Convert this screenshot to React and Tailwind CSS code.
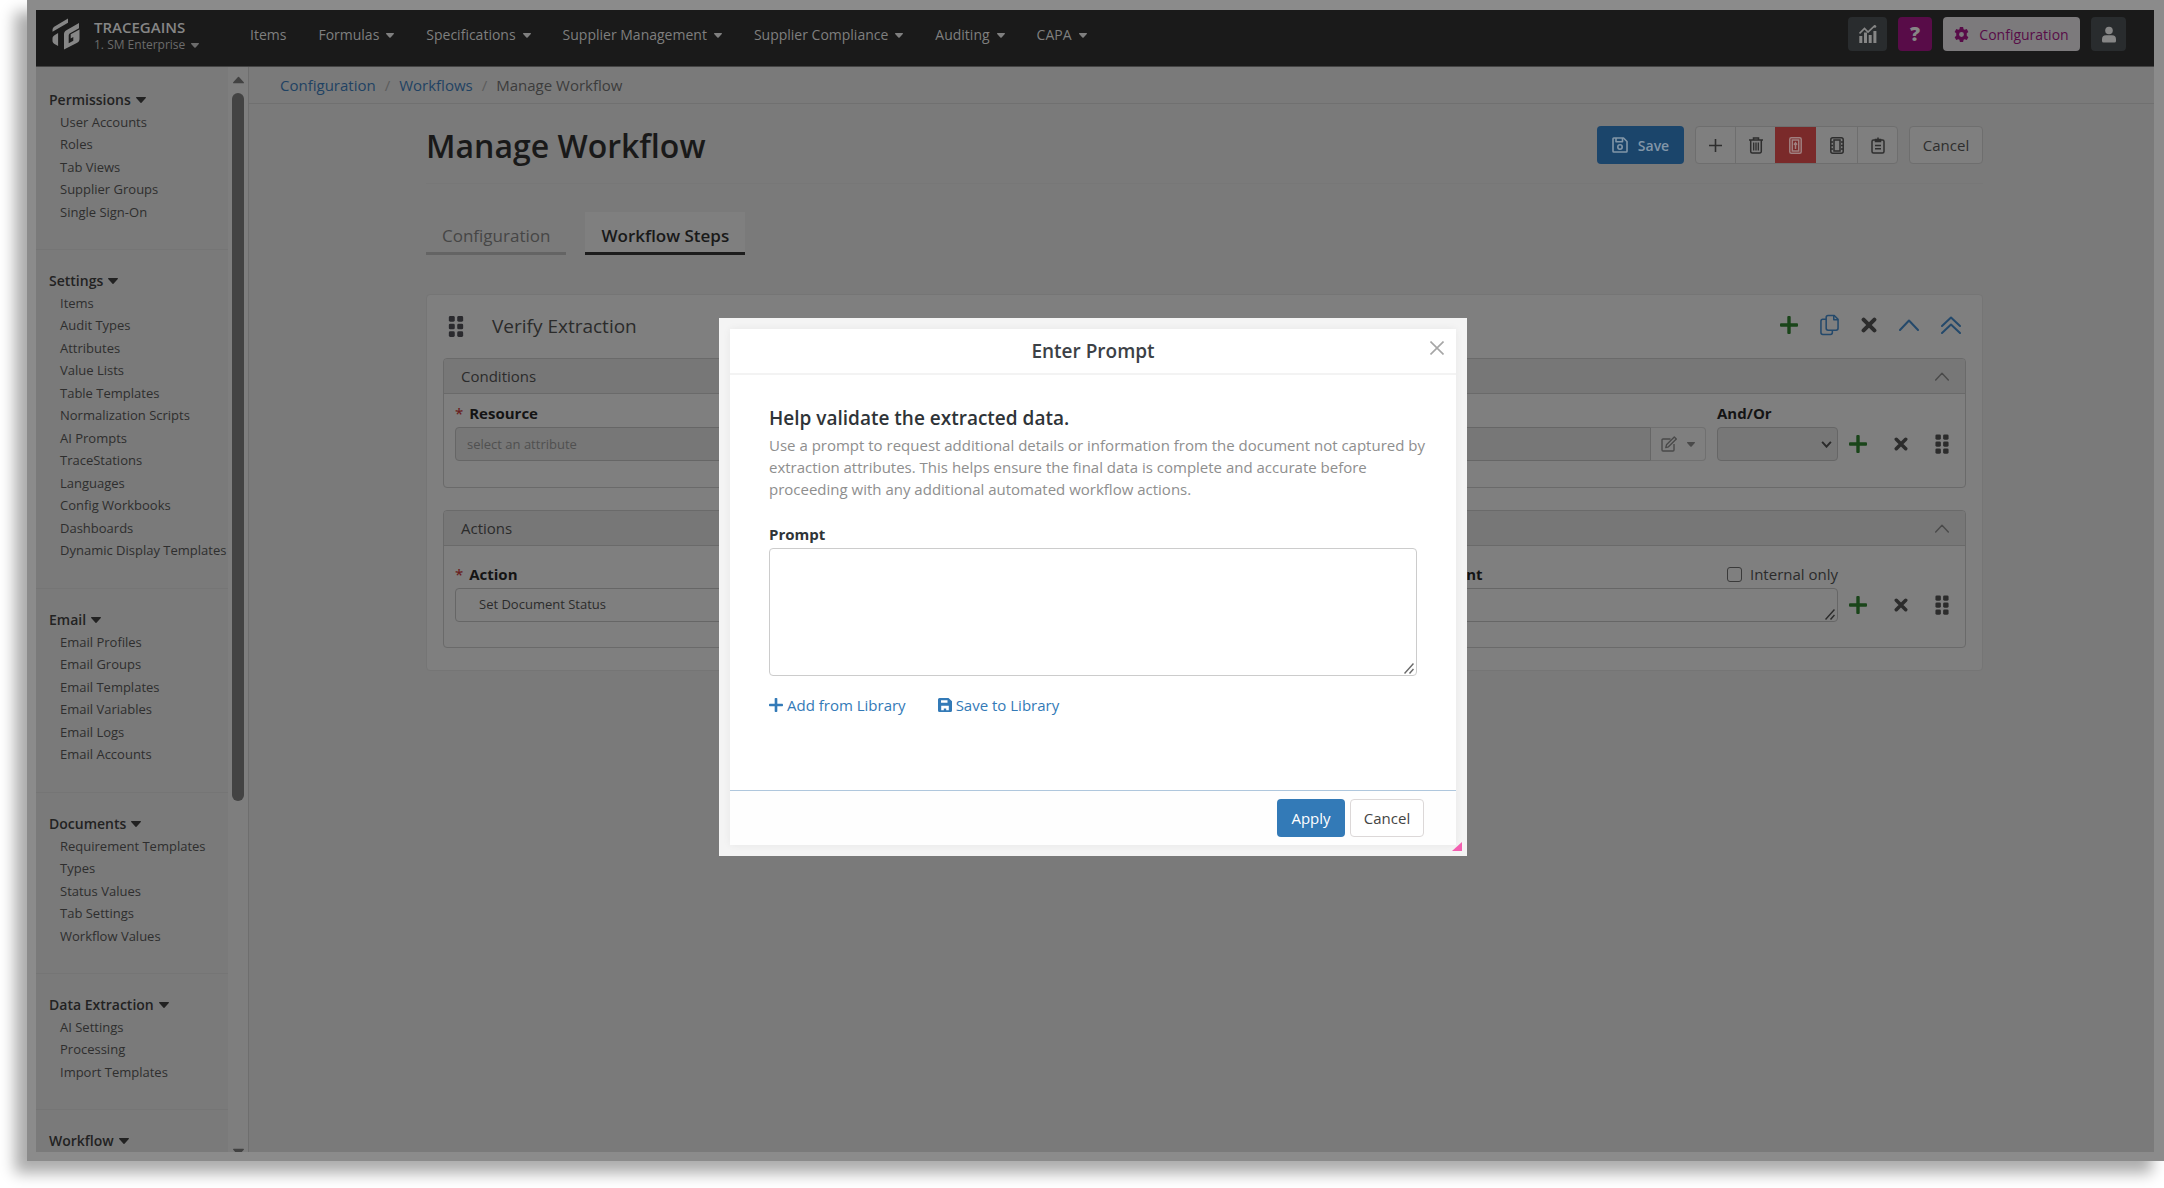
import React from "react";

const NAV = [
  { label: "Items", menu: false },
  { label: "Formulas", menu: true },
  { label: "Specifications", menu: true },
  { label: "Supplier Management", menu: true },
  { label: "Supplier Compliance", menu: true },
  { label: "Auditing", menu: true },
  { label: "CAPA", menu: true },
];

const GROUPS = [
  { title: "Permissions", items: ["User Accounts", "Roles", "Tab Views", "Supplier Groups", "Single Sign-On"] },
  {
    title: "Settings",
    items: [
      "Items", "Audit Types", "Attributes", "Value Lists", "Table Templates", "Normalization Scripts",
      "AI Prompts", "TraceStations", "Languages", "Config Workbooks", "Dashboards", "Dynamic Display Templates",
    ],
  },
  { title: "Email", items: ["Email Profiles", "Email Groups", "Email Templates", "Email Variables", "Email Logs", "Email Accounts"] },
  { title: "Documents", items: ["Requirement Templates", "Types", "Status Values", "Tab Settings", "Workflow Values"] },
  { title: "Data Extraction", items: ["AI Settings", "Processing", "Import Templates"] },
  { title: "Workflow", items: [] },
];

function Caret({ className = "w-2 h-[5px]" }) {
  return (
    <svg viewBox="0 0 10 6" className={className} fill="currentColor" aria-hidden="true">
      <path d="M0.6 0h8.800c.5 0 .8.6.4 1L5.500 5.700a.7.7 0 0 1-1 0L.2 1C-.2.6.1 0 .6 0z" />
    </svg>
  );
}

function Plus({ className }) {
  return (
    <svg viewBox="0 0 18 18" className={className} fill="currentColor" aria-hidden="true">
      <rect x="7.300" y="0" width="3.400" height="18" rx="1" />
      <rect x="0" y="7.300" width="18" height="3.400" rx="1" />
    </svg>
  );
}

function Cross({ className }) {
  return (
    <svg viewBox="0 0 16 16" className={className} fill="none" stroke="currentColor" strokeWidth="4" strokeLinecap="round" aria-hidden="true">
      <path d="M2.600 2.600l10.800 10.800M13.400 2.600L2.600 13.400" />
    </svg>
  );
}

function Grip({ className }) {
  return (
    <svg viewBox="0 0 16 22" className={className} fill="currentColor" aria-hidden="true">
      {[0, 8, 16].map((y) => (
        <React.Fragment key={y}>
          <rect x="0.500" y={y} width="6.200" height="6" rx="1.500" />
          <rect x="9.300" y={y} width="6.200" height="6" rx="1.500" />
        </React.Fragment>
      ))}
    </svg>
  );
}

function ChevronUp({ className }) {
  return (
    <svg viewBox="0 0 20 12" className={className} fill="none" stroke="currentColor" strokeWidth="2" strokeLinecap="round" strokeLinejoin="round" aria-hidden="true">
      <path d="M1 11L10 1.500L19 11" />
    </svg>
  );
}

function DoubleChevronUp({ className }) {
  return (
    <svg viewBox="0 0 20 18" className={className} fill="none" stroke="currentColor" strokeWidth="2" strokeLinecap="round" strokeLinejoin="round" aria-hidden="true">
      <path d="M1 10L10 1.500L19 10M1 17L10 8.500L19 17" />
    </svg>
  );
}

function ResizeHandle() {
  return (
    <svg viewBox="0 0 10 11" className="pointer-events-none absolute right-[3px] bottom-[2px] h-[11px] w-[10px]" fill="none" stroke="currentColor" strokeWidth="1.500" aria-hidden="true">
      <path d="M.5 10.500L9.500 .5M5.500 10.500L9.500 6" />
    </svg>
  );
}

function CopyIcon({ className }) {
  return (
    <svg viewBox="0 0 20 22" className={className} fill="none" stroke="currentColor" strokeWidth="1.600" strokeLinejoin="round" aria-hidden="true">
      <path d="M8.500 1h6.500l4 4v9.500a2 2 0 0 1-2 2H8.500a2 2 0 0 1-2-2V3a2 2 0 0 1 2-2z" />
      <path d="M14.500 1v4.500H19" />
      <path d="M6.500 5H3a2 2 0 0 0-2 2v12a2 2 0 0 0 2 2h8a2 2 0 0 0 2-2v-2.500" />
    </svg>
  );
}

function Logo() {
  return (
    <svg viewBox="0 0 28 32" className="h-[32px] w-[28px]" fill="#868686" aria-hidden="true">
      <path d="M0.500 12.500C.5 10.200 1.200 9.200 3 8.200L16 .6v4.200L.5 13.800z" />
      <path d="M27 5v5.200l-8.500 4.900c-1.300.8-1.800 1.500-1.800 3v7.200l4.600-2.600v-3.700l-2.600 1.500v-4.200L27.500 11.500v9.300c0 2-.7 3.100-2.300 4L12 31.500V16.300c0-2 .7-3.200 2.400-4.100z" />
      <path d="M0.500 20.500c0-1.500.6-2.500 2-3.300l3.600-2.100v13L2.500 26c-1.400-.8-2-1.700-2-3.200z" />
    </svg>
  );
}

function ChartIcon() {
  return (
    <svg viewBox="0 0 18 18" className="size-[18px]" fill="currentColor" aria-hidden="true">
      <path d="M.5 8.500L5.500 3.500l3.500 3.500 7-6.500" fill="none" stroke="currentColor" strokeWidth="1.700" />
      <circle cx="16" cy="1.500" r="1.300" />
      <rect x="0.300" y="11" width="3" height="7" />
      <rect x="5" y="7.500" width="3" height="10.500" />
      <rect x="9.700" y="10" width="3" height="8" />
      <rect x="14.400" y="6" width="3" height="12" />
    </svg>
  );
}

function GearIcon() {
  return (
    <svg viewBox="0 0 16 16" className="size-[15px]" fill="currentColor" fillRule="evenodd" aria-hidden="true">
      <path d="M6.300 0h3.400l.5 2.300 1.200.7 2.200-.8 1.700 3-1.700 1.500v2.600l1.700 1.500-1.700 3-2.200-.8-1.200.7-.5 2.300H6.300l-.5-2.300-1.200-.7-2.200.8-1.700-3 1.700-1.500V6.700L.7 5.200l1.700-3 2.200.8 1.200-.7zM8 5.400a2.600 2.600 0 1 0 0 5.200 2.600 2.600 0 0 0 0-5.200z" />
    </svg>
  );
}

function UserIcon() {
  return (
    <svg viewBox="0 0 14 16" className="h-[17px] w-[14px]" fill="currentColor" aria-hidden="true">
      <circle cx="7" cy="4" r="3.800" />
      <path d="M4 8.700h6a4 4 0 0 1 4 4V14.500A1.500 1.500 0 0 1 12.500 16h-11A1.500 1.500 0 0 1 0 14.500v-1.800a4 4 0 0 1 4-4z" />
    </svg>
  );
}

function SaveOutline() {
  return (
    <svg viewBox="0 0 16 16" className="size-[16px]" fill="none" stroke="currentColor" strokeWidth="1.600" strokeLinejoin="round" aria-hidden="true">
      <path d="M1.800 1h9.700L15 4.500v9.700a.8.8 0 0 1-.8.8H1.800a.8.8 0 0 1-.8-.8V1.800A.8.8 0 0 1 1.800 1z" />
      <path d="M4 1v3.800h6.500V1" />
      <circle cx="8" cy="10" r="2.200" />
    </svg>
  );
}

function SaveSolid() {
  return (
    <svg viewBox="0 0 14 14" className="size-[14px]" fill="currentColor" fillRule="evenodd" aria-hidden="true">
      <path d="M1.500 0h9L14 3.300v9.200a1.500 1.500 0 0 1-1.500 1.500h-11A1.500 1.500 0 0 1 0 12.500v-11A1.500 1.500 0 0 1 1.500 0zM3 2.200v2.600h6.500V2.200zM3.200 7.800v4.400h2.600v-1.700h2.400v1.700h2.600V7.800z" />
    </svg>
  );
}

function ThinPlus() {
  return (
    <svg viewBox="0 0 14 14" className="size-[13px]" fill="none" stroke="currentColor" strokeWidth="1.700" aria-hidden="true">
      <path d="M7 0v14M0 7h14" />
    </svg>
  );
}

function TrashIcon() {
  return (
    <svg viewBox="0 0 14 17" className="h-[17px] w-[14px]" fill="none" stroke="currentColor" strokeWidth="1.500" aria-hidden="true">
      <path d="M0 3h14M4.500 3V1h5v2M1.700 3v11.500a1.500 1.500 0 0 0 1.500 1.500h7.600a1.500 1.500 0 0 0 1.500-1.500V3" />
      <path d="M4.700 5.500v8M7 5.500v8M9.300 5.500v8" strokeWidth="1.300" />
    </svg>
  );
}

function DeviceIcon() {
  return (
    <svg viewBox="0 0 13 17" className="h-[17px] w-[13px]" fill="none" stroke="currentColor" strokeWidth="1.500" aria-hidden="true">
      <rect x="0.800" y="0.800" width="11.400" height="15.400" rx="1.500" />
      <rect x="3.300" y="3" width="6.400" height="11" />
      <path d="M6.500 12V6M5 7.700l1.500-2 1.500 2" />
    </svg>
  );
}

function NotebookIcon() {
  return (
    <svg viewBox="0 0 14 17" className="h-[17px] w-[14px]" fill="none" stroke="currentColor" strokeWidth="1.500" aria-hidden="true">
      <rect x="0.800" y="0.800" width="12.400" height="15.400" rx="2" />
      <rect x="4" y="3" width="6" height="11" />
      <path d="M1 5h2M1 8.500h2M1 12h2M11 5h2M11 8.500h2M11 12h2" />
    </svg>
  );
}

function ClipboardIcon() {
  return (
    <svg viewBox="0 0 14 17" className="h-[17px] w-[14px]" fill="none" stroke="currentColor" strokeWidth="1.500" aria-hidden="true">
      <rect x="1" y="3" width="12" height="13" rx="1.500" />
      <path d="M4.500 2.500h5v2h-5zM7 .5v2" fill="currentColor" />
      <path d="M4 8.500h6M4 11.800h6" />
    </svg>
  );
}

function EditIcon() {
  return (
    <svg viewBox="0 0 16 16" className="size-[16px]" fill="none" stroke="currentColor" strokeWidth="1.400" strokeLinejoin="round" aria-hidden="true">
      <path d="M9.500 3H2a1 1 0 0 0-1 1v10a1 1 0 0 0 1 1h10a1 1 0 0 0 1-1V8" />
      <path d="M13.300 1l2 2-7.800 7.800-2.700.8.7-2.800z" />
    </svg>
  );
}

function Header() {
  return (
    <header className="flex h-[57px] shrink-0 items-start justify-between border-b border-[#444] bg-[#1a1a1a] pr-7 pl-4">
      <div className="flex">
        <div className="flex w-[198px] gap-[14px] pt-2">
          <Logo />
          <div className="text-[#868686]">
            <div className="text-[15px] leading-[18px] font-semibold">TRACEGAINS</div>
            <button className="flex items-center gap-[6px] text-[12px] leading-[18px] text-[#6c6c6c]">
              1. SM Enterprise <Caret />
            </button>
          </div>
        </div>
        <nav className="flex h-12 items-center gap-8 text-[14px] text-[#7f7f7f]">
          {NAV.map((n) => (
            <a key={n.label} href="#" className="flex items-center gap-[7px]">
              {n.label}
              {n.menu && <Caret className="mt-[2px] h-[5px] w-2" />}
            </a>
          ))}
        </nav>
      </div>
      <div className="flex gap-[11px] pt-[7px] text-[#868686]">
        <button aria-label="Reports" className="flex h-[34px] w-[39px] items-center justify-center rounded bg-[#292c2e]">
          <ChartIcon />
        </button>
        <button aria-label="Help" className="flex h-[34px] w-[34px] items-center justify-center rounded bg-[#580c48] text-[20px] leading-none font-extrabold">
          ?
        </button>
        <button className="flex h-[34px] w-[137px] items-center justify-center gap-[10px] rounded bg-[#7c7a7c] text-[14px] text-[#580c48]">
          <GearIcon /> Configuration
        </button>
        <button aria-label="Account" className="flex h-[34px] w-[35px] items-center justify-center rounded bg-[#292c2e]">
          <UserIcon />
        </button>
      </div>
    </header>
  );
}

function Sidebar() {
  return (
    <aside className="flex w-[213px] shrink-0 overflow-hidden border-r border-[#6e6e6e]">
      <div className="min-w-0 flex-1 pt-[21px]">
        {GROUPS.map((g, i) => (
          <section key={g.title} className={i ? "border-t border-[#757575] pt-[19px]" : ""}>
            <button className="flex items-center gap-[5px] pl-[13px] text-[14px] leading-[23px] font-semibold text-[#222]">
              {g.title} <Caret className="h-[6px] w-[10px]" />
            </button>
            <ul className="pb-[26px] pl-6 text-[13px] leading-[22px] whitespace-nowrap text-[#2e2e2e]">
              {g.items.map((t) => (
                <li key={t} className="even:leading-[23px]">
                  <a href="#">{t}</a>
                </li>
              ))}
            </ul>
          </section>
        ))}
      </div>
      <div className="flex w-5 flex-col items-center bg-[#7e7e7e] text-[#424242]">
        <div className="flex h-full w-full flex-col items-center gap-[9px] pt-[9px]">
          <Caret className="h-2 w-[11px] rotate-180" />
          <div className="h-[66%] w-3 rounded-full bg-[#434343]" />
        </div>
        <Caret className="-mb-1 h-2 w-[11px] shrink-0" />
      </div>
    </aside>
  );
}

const TOOLS = [
  { name: "Add", icon: <ThinPlus />, cls: "w-[39px]" },
  { name: "Delete", icon: <TrashIcon />, cls: "w-10 border-l border-[#6e6e6e]" },
  { name: "Archive", icon: <DeviceIcon />, cls: "w-[41px] bg-[#7a2a2a] text-[#a08080]" },
  { name: "Notebook", icon: <NotebookIcon />, cls: "w-[41px]" },
  { name: "Clipboard", icon: <ClipboardIcon />, cls: "w-10 border-l border-[#6e6e6e]" },
];

function Toolbar() {
  return (
    <div className="flex gap-[11px] text-[15px] text-[#2e2e2e]">
      <button className="flex h-[38px] w-[87px] items-center justify-center gap-[10px] rounded bg-[#1b456b] text-[14px] font-semibold text-[#8296a8]">
        <SaveOutline /> Save
      </button>
      <div className="flex h-[38px] overflow-hidden rounded border border-[#6e6e6e] bg-[#7f7f7f]">
        {TOOLS.map((t) => (
          <button key={t.name} aria-label={t.name} className={`flex items-center justify-center ${t.cls}`}>
            {t.icon}
          </button>
        ))}
      </div>
      <button className="h-[38px] w-[74px] rounded border border-[#6e6e6e] bg-[#7f7f7f]">Cancel</button>
    </div>
  );
}

function RowTools() {
  return (
    <div className="flex h-[34px] items-center gap-[27px] text-[#2c2c2c]">
      <button aria-label="Add row" className="text-[#1a451a]"><Plus className="size-[18px]" /></button>
      <button aria-label="Remove row"><Cross className="size-[14px]" /></button>
      <button aria-label="Move row"><Grip className="h-5 w-[14px]" /></button>
    </div>
  );
}

function Card({ title, children }) {
  return (
    <section className="overflow-hidden rounded border border-[#6a6a6a]">
      <header className="flex h-[35px] items-center justify-between border-b border-[#6a6a6a] bg-[#777] pr-4 pl-[17px] text-[15px] text-[#2b2b2b]">
        <span>{title}</span>
        <button aria-label={`Collapse ${title}`} className="text-[#4a4a4a]"><ChevronUp className="h-[9px] w-[14px]" /></button>
      </header>
      {children}
    </section>
  );
}

const labelCls = "mb-[3px] flex gap-[6px] text-[15px] leading-[22px] font-bold text-[#141414]";
const fieldCls = "h-[34px] w-full min-w-0 rounded border border-[#666] text-[13px]";

function StepPanel() {
  return (
    <section className="mt-[39px] rounded border border-[#757575] bg-[#7f7f7f] px-4 pb-[22px]">
      <div className="flex h-[63px] items-center justify-between px-[5px]">
        <div className="flex items-center gap-7">
          <button aria-label="Move step" className="text-[#2a2a2e]"><Grip className="h-[21px] w-4" /></button>
          <h2 className="text-[19px] text-[#2b2b2b]">Verify Extraction</h2>
        </div>
        <div className="flex items-center gap-[22px] pb-1 text-[#24496b]">
          <button aria-label="Add step" className="text-[#1a451a]"><Plus className="size-[18px]" /></button>
          <button aria-label="Copy step"><CopyIcon className="h-[22px] w-[19px]" /></button>
          <button aria-label="Delete step" className="text-[#2c2c2c]"><Cross className="size-4" /></button>
          <button aria-label="Collapse step"><ChevronUp className="h-3 w-5" /></button>
          <button aria-label="Collapse all"><DoubleChevronUp className="h-[18px] w-5" /></button>
        </div>
      </div>
      <div className="flex flex-col gap-[22px]">
        <Card title="Conditions">
          <div className="flex items-end gap-[11px] pt-2 pr-4 pb-[26px] pl-[11px]">
            <div className="flex-1">
              <label htmlFor="resource" className={labelCls}><span className="font-semibold text-[#6a1f1f]">*</span>Resource</label>
              <input id="resource" placeholder="select an attribute" className={`${fieldCls} bg-[#777] px-[11px] placeholder:text-[#505050]`} />
            </div>
            <div className="flex flex-1">
              <input aria-label="Value" className={`${fieldCls} rounded-r-none bg-[#777]`} />
              <button aria-label="Edit value" className="flex h-[34px] w-[55px] shrink-0 items-center justify-center gap-[10px] rounded-r border border-l-0 border-[#707070] text-[#4a4a4a]">
                <EditIcon /> <Caret />
              </button>
            </div>
            <div className="w-[121px]">
              <label htmlFor="andor" className={labelCls}>And/Or</label>
              <div className="relative">
                <select id="andor" className={`${fieldCls} appearance-none bg-[#777]`}><option></option></select>
                <svg viewBox="0 0 12 8" className="pointer-events-none absolute top-[14px] right-[6px] h-[7px] w-[11px]" fill="none" stroke="#2a2a2a" strokeWidth="2.200" aria-hidden="true"><path d="M1 1l5 5.500L11 1" /></svg>
              </div>
            </div>
            <RowTools />
          </div>
        </Card>
        <Card title="Actions">
          <div className="flex items-end gap-[11px] pt-[17px] pr-4 pb-[25px] pl-[11px]">
            <div className="flex-2">
              <label htmlFor="action" className={labelCls}><span className="font-semibold text-[#6a1f1f]">*</span>Action</label>
              <select id="action" className={`${fieldCls} appearance-none px-[23px] text-[#2b2b2b]`}><option>Set Document Status</option></select>
            </div>
            <div className="w-[429px]">
              <div className="flex justify-between text-[15px] text-[#2b2b2b]">
                <label htmlFor="comment" className={labelCls}>Comment</label>
                <label className="flex h-[22px] items-center gap-2">
                  <input type="checkbox" className="size-[15px] appearance-none rounded-[3px] border border-[#3a3a3a]" />
                  Internal only
                </label>
              </div>
              <div className="relative text-[#2c2c2c]">
                <textarea id="comment" className={`${fieldCls} block resize-none`} />
                <ResizeHandle />
              </div>
            </div>
            <RowTools />
          </div>
        </Card>
      </div>
    </section>
  );
}

function Main() {
  return (
    <main className="min-w-0 flex-1">
      <ol className="flex h-[37px] items-center gap-[9px] border-b border-[#707070] pl-[31px] text-[15px] text-[#3c3c3c]">
        <li><a href="#" className="text-[#1f4263]">Configuration</a></li>
        <li className="text-[#5c5c5c]">/</li>
        <li><a href="#" className="text-[#1f4263]">Workflows</a></li>
        <li className="text-[#5c5c5c]">/</li>
        <li>Manage Workflow</li>
      </ol>
      <div className="pr-[171px] pl-[177px]">
        <div className="flex h-20 items-start justify-between border-b border-[#777] pt-[22px]">
          <h1 className="text-[32px] leading-10 font-semibold text-[#191919]">Manage Workflow</h1>
          <Toolbar />
        </div>
        <div className="mt-7 flex gap-[19px] text-[17px]" role="tablist">
          <button role="tab" aria-selected="false" className="h-[43px] border-b-[3px] border-[#646464] px-4 pt-2 text-[#464646]">Configuration</button>
          <button role="tab" aria-selected="true" className="h-[43px] border-b-[3px] border-[#1c1c1c] bg-[#7f7f7f] px-4 pt-2 font-semibold text-[#191919]">Workflow Steps</button>
        </div>
        <StepPanel />
      </div>
    </main>
  );
}

function PromptDialog() {
  return (
    <div className="absolute inset-0 flex items-start justify-center pt-[308px] pr-1">
      <div role="dialog" aria-labelledby="dlg-title" className="relative w-[748px] bg-[#f4f4f4] px-[11px] py-[11px]">
        <div className="bg-white shadow-[0_0_8px_rgba(0,0,0,0.06)]">
          <div className="relative flex h-[46px] items-center justify-center border-b-2 border-[#f3f3f3]">
            <h2 id="dlg-title" className="text-[19px] font-semibold text-[#3c4146]">Enter Prompt</h2>
            <button aria-label="Close" className="absolute top-3 right-3 text-[#a6a6a6]">
              <svg viewBox="0 0 14 14" className="size-[14px]" fill="none" stroke="currentColor" strokeWidth="1.600" aria-hidden="true"><path d="M.5.5l13 13M13.500.5l-13 13" /></svg>
            </button>
          </div>
          <div className="px-[39px] pt-[30px] text-[15px]">
            <h3 className="text-[19px] leading-[26px] font-semibold text-[#2f3438]">Help validate the extracted data.</h3>
            <p className="mt-[3px] leading-[22px] whitespace-nowrap text-[#8e8e8e]">
              Use a prompt to request additional details or information from the document not captured by
              <br />
              extraction attributes. This helps ensure the final data is complete and accurate before
              <br />
              proceeding with any additional automated workflow actions.
            </p>
            <label htmlFor="prompt" className="mt-[23px] block leading-[22px] font-bold text-[#2f3438]">Prompt</label>
            <div className="relative mt-[3px] text-[#6a6a6a]">
              <textarea id="prompt" className="block h-[128px] w-full resize-none rounded border border-[#ccc]" />
              <ResizeHandle />
            </div>
            <div className="mt-[18px] flex h-[22px] items-center gap-8 text-[#337ab7]">
              <button className="flex items-center gap-1"><Plus className="size-[14px]" />Add from Library</button>
              <button className="flex items-center gap-1"><SaveSolid />Save to Library</button>
            </div>
          </div>
          <div className="mt-[74px] flex justify-end gap-[5px] border-t border-[#afc7dd] bg-[#fefefe] pt-2 pr-8 pb-2 text-[15px]">
            <button className="h-[38px] w-[68px] rounded bg-[#337ab7] text-white">Apply</button>
            <button className="h-[38px] w-[74px] rounded border border-[#dcd8d8] bg-white text-[#444]">Cancel</button>
          </div>
        </div>
        <svg viewBox="0 0 10 9" className="absolute right-[5px] bottom-[5px] h-[9px] w-[10px]" aria-hidden="true"><path d="M10 0v9H0z" fill="#f35fb0" /></svg>
      </div>
    </div>
  );
}

export default function App() {
  return (
    <div className="flex h-screen overflow-hidden bg-white pb-[27px] pl-[27px] font-['Open_Sans',sans-serif]">
      <div className="flex min-w-0 flex-1 bg-[#8b8b8b] pt-[10px] pr-[10px] pb-[9px] pl-[9px] shadow-[-12px_12px_14px_rgba(0,0,0,0.33)]">
        <div className="relative flex min-w-0 flex-1 flex-col overflow-hidden bg-[#7a7a7a]">
          <Header />
          <div className="flex min-h-0 flex-1">
            <Sidebar />
            <Main />
          </div>
          <PromptDialog />
        </div>
      </div>
    </div>
  );
}
